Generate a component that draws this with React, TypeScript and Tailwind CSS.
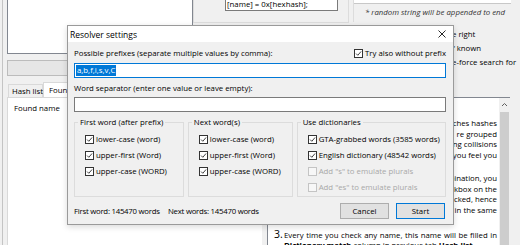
import React from 'react';

type CheckProps = { label: string; checked?: boolean; disabled?: boolean };

const Check = ({ label, checked = true, disabled = false }: CheckProps) => (
  <label className="flex h-[11px] items-center gap-[2px] whitespace-nowrap">
    <span
      className={`flex h-[9px] w-[9px] shrink-0 items-center justify-center border ${
        disabled ? 'border-[#c4c4c4] bg-[#f7f7f7]' : 'border-[#333333] bg-white'
      }`}
    >
      {checked && (
        <svg viewBox="0 0 9 9" className="h-[9px] w-[9px]">
          <path d="M1.4 4.6 L3.6 6.8 L7.8 1.9" fill="none" stroke="#222222" strokeWidth="1.1" />
        </svg>
      )}
    </span>
    <span className={disabled ? 'text-[#a8a8a8]' : 'text-black'}>{label}</span>
  </label>
);

type GroupProps = { title: string; className: string; children: React.ReactNode };

const Group = ({ title, className, children }: GroupProps) => (
  <fieldset className={`h-[80px] border border-[#dcdcdc] ${className}`}>
    <legend className="ml-[3px] px-[2px] leading-[11px]">{title}</legend>
    <div className="mt-[6px] flex flex-col gap-[5px] pl-[10px]">{children}</div>
  </fieldset>
);

const ResolverDialog = () => (
  <div className="absolute left-[67px] top-[25px] flex h-[200px] w-[387px] flex-col border border-[#9a9a9a] bg-[#f0f0f0] shadow-[0_2px_6px_rgba(0,0,0,0.15)]">
    <div className="flex h-[16px] items-center justify-between bg-white pl-[2px] pr-[7px]">
      <span className="text-[8.5px]">Resolver settings</span>
      <svg viewBox="0 0 8 8" className="h-[8px] w-[8px]">
        <path d="M0.5 0.5 L7.5 7.5 M7.5 0.5 L0.5 7.5" stroke="#111111" strokeWidth="0.9" />
      </svg>
    </div>
    <div className="flex flex-1 flex-col pl-[6px] pr-[7px] pt-[6px]">
      <div className="flex h-[11px] items-center justify-between">
        <span>Possible prefixes (separate multiple values by comma):</span>
        <Check label="Try also without prefix" />
      </div>
      <div className="mt-[4px] flex h-[15px] items-center border border-[#0078d7] bg-white px-[1px]">
        <span className="bg-[#0078d7] px-[1px] leading-[11px] text-white">a,b,f,i,s,v,C</span>
      </div>
      <div className="mt-[5px] h-[11px] leading-[11px]">Word separator (enter one value or leave empty):</div>
      <div className="mt-[3px] h-[15px] border border-[#7a7a7a] bg-white" />
      <div className="mt-[5px] flex gap-[4px]">
        <Group title="First word (after prefix)" className="w-[111px]">
          <Check label="lower-case (word)" />
          <Check label="upper-first (Word)" />
          <Check label="upper-case (WORD)" />
        </Group>
        <Group title="Next word(s)" className="w-[106px]">
          <Check label="lower-case (word)" />
          <Check label="upper-first (Word)" />
          <Check label="upper-case (WORD)" />
        </Group>
        <Group title="Use dictionaries" className="w-[151px]">
          <Check label="GTA-grabbed words (3585 words)" />
          <Check label="English dictionary (48542 words)" />
          <Check label={'Add "s" to emulate plurals'} checked={false} disabled />
          <Check label={'Add "es" to emulate plurals'} checked={false} disabled />
        </Group>
      </div>
      <div className="mt-[6px] flex h-[16px] items-center whitespace-nowrap">
        <span className="w-[94px] shrink-0 tracking-[-0.25px]">First word: 145470 words</span>
        <span className="tracking-[-0.25px]">Next words: 145470 words</span>
        <button className="ml-auto h-[16px] w-[49px] shrink-0 border border-[#adadad] bg-[#e1e1e1]">Cancel</button>
        <button className="ml-[7px] mr-[1px] h-[16px] w-[49px] shrink-0 border border-[#0078d7] bg-[#e1e1e1]">Start</button>
      </div>
    </div>
  </div>
);

export default function App() {
  return (
    <div className="relative h-[245px] w-[520px] overflow-hidden bg-[#f0f0f0] font-['Segoe_UI','Open_Sans',sans-serif] text-[7.8px] leading-[11px] text-black">
      <div className="grid h-full grid-cols-[7px_186px_69px_5px_243px_10px] grid-rows-[57px_40px_148px]">
        {/* splitter on the far left */}
        <div className="row-span-3 flex">
          <div className="ml-[2px] w-px bg-[#c4c4c4]" />
        </div>

        {/* top-left text area */}
        <div className="h-[54px] border-x border-b border-[#828790] bg-white" />

        {/* options panel */}
        <div className="col-span-4 row-span-2 flex flex-col">
          <div className="flex h-[23px]">
            <div className="flex h-[23px] w-[156px] border-x border-b border-[#dcdcdc] pl-[31px]">
              <div className="h-[11px] w-[113px] border-x border-b border-[#7a7a7a] bg-white pl-[1px] leading-[8px]">
                [name] = 0x[hexhash];
              </div>
            </div>
            <div className="ml-[4px] h-[22px] w-[163px] border-l border-[#dcdcdc]">
              <div className="h-[4px] w-[157px] border-b border-[#c8c8c8] bg-white" />
              <div className="pl-[11px] pt-[3px] italic text-[#333333]">* random string will be appended to end</div>
            </div>
          </div>
          <div className="mt-[6px] flex flex-col gap-[3px] pl-[259px]">
            <span>e right</span>
            <span>f known</span>
            <span>e-force search for</span>
          </div>
        </div>

        {/* progress + tabs */}
        <div className="flex flex-col pt-[3px]">
          <div className="h-[16px] border border-[#bcbcbc] bg-[#e6e6e6]" />
          <div className="mt-[6px] flex h-[15px] items-end whitespace-nowrap pl-px">
            <div className="flex h-[13px] w-[35px] shrink-0 items-center border border-b-0 border-[#d9d9d9] pl-[3px]">Hash list</div>
            <div className="flex h-[15px] w-[80px] shrink-0 items-center border border-b-0 border-[#d9d9d9] bg-white pl-[5px]">Found names</div>
          </div>
        </div>

        {/* tab page */}
        <div className="col-span-2 border-l border-t border-[#d9d9d9] bg-white pl-[6px] pt-[5px]">
          <span>Found name</span>
        </div>

        <div />

        {/* help text */}
        <div className="flex border-l border-t border-[#828790] bg-white">
          <div className="flex-1 pl-[5px] pr-[2px] pt-[20px] leading-[10.5px]">
            <div className="pl-[11px]">
              <div className="text-right">tches hashes</div>
              <div className="text-right">re grouped</div>
              <div className="text-right">ding collisions</div>
              <div className="text-right">r you feel you</div>
              <div className="mt-[13px] text-right">bination, you</div>
              <div className="text-right">kbox on the</div>
              <div className="text-right">ecked, hence</div>
              <div className="text-right">in the same</div>
              <div>group.</div>
            </div>
            <div className="mt-[3px] flex items-baseline">
              <span className="w-[11px] pl-px text-[10.5px]">3.</span>
              <p className="flex-1 text-justify">
                Every time you check any name, this name will be filled in <b>Dictionary match</b> column in
                previous tab <b>Hash list</b>.
              </p>
            </div>
          </div>
          <div className="flex w-[11px] flex-col bg-[#f0f0f0]">
            <svg viewBox="0 0 11 14" className="h-[14px] w-[11px]">
              <path d="M3 8 L5.5 5.5 L8 8" fill="none" stroke="#606060" strokeWidth="1" />
            </svg>
            <div className="mx-[1px] flex-1 bg-[#cdcdcd]" />
          </div>
        </div>
        <div />
      </div>
      <ResolverDialog />
    </div>
  );
}
